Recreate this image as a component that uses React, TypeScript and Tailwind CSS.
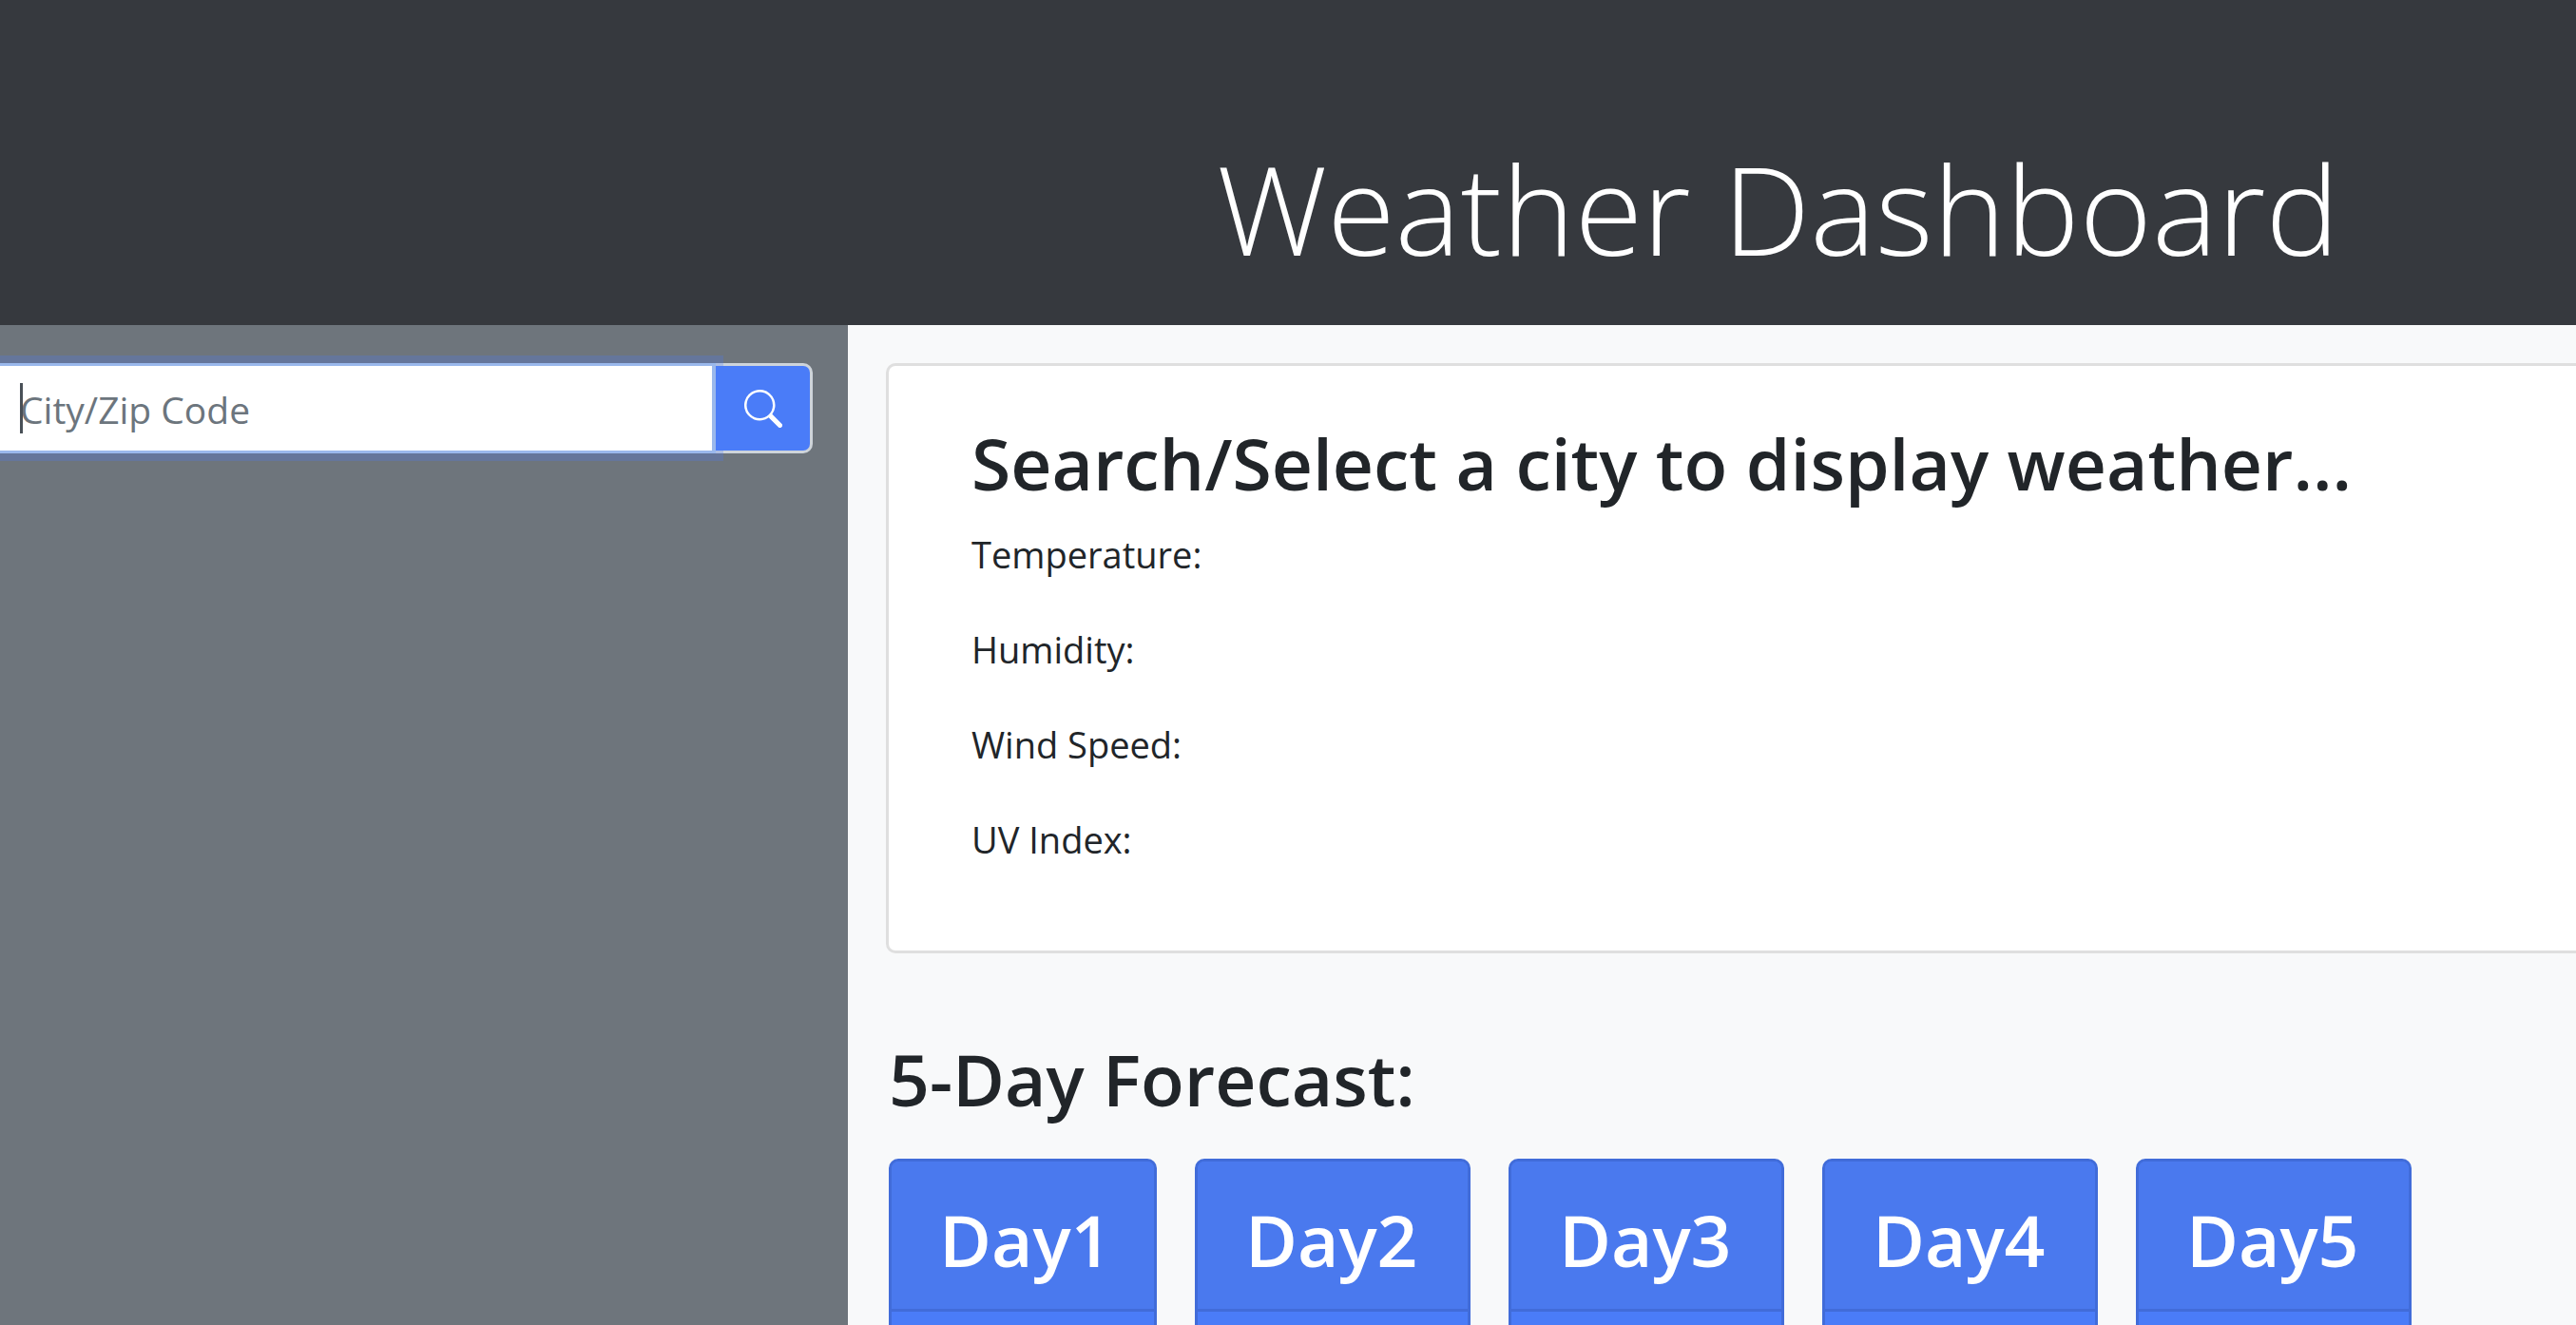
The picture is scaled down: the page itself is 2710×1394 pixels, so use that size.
import { BsSearch } from "react-icons/bs";

const readings = ["Temperature:", "Humidity:", "Wind Speed:", "UV Index:"];

const days = [
  { name: "Day1", width: "w-[282px]" },
  { name: "Day2", width: "w-[290px]" },
  { name: "Day3", width: "w-[290px]" },
  { name: "Day4", width: "w-[290px]" },
  { name: "Day5", width: "w-[290px]" },
];

function SearchBar() {
  return (
    <form className="flex h-[95px]" onSubmit={(e) => e.preventDefault()}>
      <div className="relative z-10 flex min-w-0 flex-1">
        <input
          type="text"
          aria-label="City/Zip Code"
          placeholder="City/Zip Code"
          className="w-full border-y-[3px] border-r-4 border-[#9ab8ec] bg-white pt-1 pl-[21px] text-[39px] text-[#495057] shadow-[0_0_0_8px_rgba(74,123,247,0.25)] outline-none placeholder:text-[#6c757d] placeholder:opacity-100"
        />
        <span className="pointer-events-none absolute left-[21px] top-[21px] h-[53px] w-[3px] bg-[#495057]" />
      </div>
      <button
        type="submit"
        aria-label="Search"
        className="flex w-[102px] items-center justify-center rounded-r-[10px] border-y-[3px] border-r-[3px] border-[#ced4da] bg-[#4a7cf8] text-white"
      >
        <BsSearch className="size-10" />
      </button>
    </form>
  );
}

function CurrentWeather() {
  return (
    <section className="rounded-l-[10px] border-y-[3px] border-l-[3px] border-[#dfdfdf] bg-white pt-[54px] pb-[47px] pl-[87px]">
      <h2 className="mb-[18px] text-[75px] leading-[96px] font-semibold">
        Search/Select a city to display weather...
      </h2>
      {readings.map((label) => (
        <p key={label} className="mb-10 text-[38px] leading-[60px]">
          {label}
        </p>
      ))}
    </section>
  );
}

function Forecast() {
  return (
    <section className="pt-[84px] pl-[3px]">
      <h2 className="mb-9 text-[75px] leading-[96px] font-semibold">5-Day Forecast:</h2>
      <div className="flex gap-10">
        {days.map((day) => (
          <article
            key={day.name}
            className={`${day.width} h-[600px] shrink-0 overflow-hidden rounded-[10px] border-[3px] border-[#416cd9] bg-[#4a7cf8] text-white`}
          >
            <h2 className="border-b-[3px] border-[#416cd9] bg-[#4a79ee] pt-[34px] pb-[25px] pl-[50px] text-[75px] leading-[96px] font-semibold">
              {day.name}
            </h2>
          </article>
        ))}
      </div>
    </section>
  );
}

export default function App() {
  return (
    <div className="flex h-screen flex-col overflow-hidden bg-[#f8f9fa] font-['Open_Sans','Noto_Sans',sans-serif] text-[#212529]">
      <header className="bg-[#36393e] pt-[135px] pb-[39px] pl-[1031px] text-center">
        <h1 className="text-[130px] leading-[168px] font-light whitespace-nowrap text-white">
          Weather Dashboard
        </h1>
      </header>
      <div className="flex min-h-0 flex-1">
        <aside className="w-[892px] shrink-0 bg-[#6e757c] pt-10 pr-[37px]">
          <SearchBar />
        </aside>
        <main className="min-w-0 flex-1 pt-10 pl-10">
          <CurrentWeather />
          <Forecast />
        </main>
      </div>
    </div>
  );
}
